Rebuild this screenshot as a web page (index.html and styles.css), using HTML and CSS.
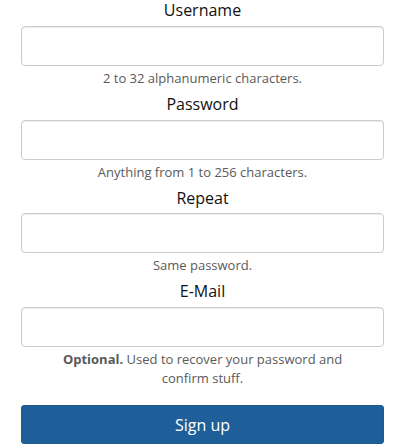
FILE: index.html
```html
<!DOCTYPE html>
<html>
<head>
<meta charset="utf-8">
<link rel="stylesheet" href="styles.css">
</head>
<body>
<form class="signup">
  <div class="group">
    <label class="label" for="u">Username</label>
    <input class="field" id="u" type="text">
    <p class="help">2 to 32 alphanumeric characters.</p>
  </div>
  <div class="group">
    <label class="label" for="p">Password</label>
    <input class="field" id="p" type="password">
    <p class="help">Anything from 1 to 256 characters.</p>
  </div>
  <div class="group">
    <label class="label" for="r">Repeat</label>
    <input class="field" id="r" type="password">
    <p class="help">Same password.</p>
  </div>
  <div class="group">
    <label class="label" for="e">E-Mail</label>
    <input class="field" id="e" type="email">
    <p class="help"><strong>Optional.</strong> Used to recover your password and<br>confirm stuff.</p>
  </div>
  <button class="submit" type="button">Sign up</button>
</form>
</body>
</html>
```

FILE: styles.css
```css
html, body {
  margin: 0;
  padding: 0;
  background: #fff;
}
body {
  font-family: "Open Sans", "Liberation Sans", sans-serif;
}
.signup {
  display: flex;
  flex-direction: column;
  padding: 0 21px;
  margin-top: -1px;
}
.group {
  display: flex;
  flex-direction: column;
  margin-bottom: 5.4px;
}
.label {
  font-size: 16px;
  line-height: 22.86px;
  color: #111;
  text-align: center;
  margin-bottom: 4px;
}
.field {
  box-sizing: border-box;
  height: 40px;
  width: 100%;
  border: 1px solid #ccc;
  border-radius: 4px;
  box-shadow: inset 0 1px 1px rgba(0,0,0,0.075);
  background: #fff;
  margin: 0;
  font: inherit;
}
.help {
  margin: 3px 0 0;
  font-size: 13px;
  line-height: 18.57px;
  color: #5a5a5a;
  text-align: center;
}
.help strong {
  font-weight: 700;
}
.submit {
  margin-top: 12.5px;
  height: 38.5px;
  width: 100%;
  border: 1px solid #1d5a90;
  border-radius: 3px;
  background: #1f5f99;
  color: #fff;
  font-family: "Open Sans", "Liberation Sans", sans-serif;
  font-size: 16px;
  padding: 0;
}
```
